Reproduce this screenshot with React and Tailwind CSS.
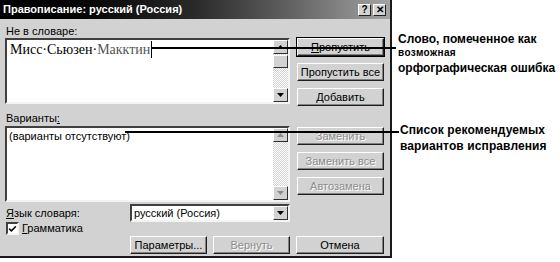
import { Check } from 'lucide-react';

function Btn({ children, disabled, isDefault, className = '' }) {
  return (
    <div
      className={`h-[18px] flex items-center justify-center text-[11px] leading-none border border-t-white border-l-white border-r-[#202020] border-b-[#202020] shadow-[inset_-1px_-1px_0_#808080] ${
        disabled ? 'text-[#8c8c8c] [text-shadow:1px_1px_0_#fff]' : 'text-black'
      } ${isDefault ? 'outline outline-1 outline-black' : ''} ${className}`}
    >
      {children}
    </div>
  );
}

function ScrollArrow({ up, disabled }) {
  return (
    <div className="w-[15px] h-[14px] flex items-center justify-center bg-[#d2d2d2] border border-t-white border-l-white border-r-[#303030] border-b-[#303030]">
      <svg width="7" height="4" viewBox="0 0 7 4">
        <path
          d={up ? 'M0 4 L3.5 0 L7 4 Z' : 'M0 0 L3.5 4 L7 0 Z'}
          fill={disabled ? '#8c8c8c' : '#000'}
        />
      </svg>
    </div>
  );
}

function Sunken({ className = '', children }) {
  return (
    <div className={`border-2 border-t-[#404040] border-l-[#404040] border-r-[#f4f4f4] border-b-[#f4f4f4] bg-white ${className}`}>
      {children}
    </div>
  );
}

export default function App() {
  return (
    <div className="relative w-[560px] h-[262px] bg-white flex font-['Liberation_Sans',Arial,sans-serif] overflow-hidden">
      {/* dialog */}
      <div className="w-[392px] h-[258px] bg-[#d2d2d2] border-r-2 border-b-2 border-r-[#1a1a1a] border-b-[#1a1a1a] flex flex-col">
        <div className="h-[19px] bg-linear-to-r from-black via-[#2a2a2a] to-[#a4a4a4] flex items-center pl-[3px] pr-[4px]">
          <span className="text-white font-bold text-[11px]">Правописание: русский (Россия)</span>
          <div className="ml-auto flex gap-[2px]">
            <div className="w-[13px] h-[12px] bg-[#d2d2d2] border border-t-white border-l-white border-r-[#202020] border-b-[#202020] flex items-center justify-center text-[10px] font-bold leading-none">?</div>
            <div className="w-[13px] h-[12px] bg-[#d2d2d2] border border-t-white border-l-white border-r-[#202020] border-b-[#202020] flex items-center justify-center text-[10px] font-bold leading-none">✕</div>
          </div>
        </div>

        {/* not in dictionary */}
        <div className="flex pl-[5px] pt-[6px]">
          <div className="w-[285px]">
            <div className="h-[13px] text-[11px] leading-[13px] pl-[1px]">Не в словаре:</div>
            <Sunken className="h-[66px] flex">
              <div className="flex-1 pl-[3px] pt-[1px] flex items-start">
                <span className="font-['Liberation_Serif','Times_New_Roman',serif] text-[14px] leading-[18px] text-black">
                  Мисс·Сьюзен·<span className="text-[#555]">Макктин</span>
                </span>
                <span className="w-[1px] h-[17px] bg-black ml-[1px]" />
              </div>
              <div className="w-[15px] flex flex-col bg-[repeating-conic-gradient(#fff_0_25%,#d2d2d2_0_50%)] bg-[length:2px_2px]">
                <ScrollArrow up />
                <div className="w-[15px] h-[13px] mt-[1px] bg-[#d2d2d2] border border-t-white border-l-white border-r-[#303030] border-b-[#303030]" />
                <div className="flex-1" />
                <ScrollArrow />
              </div>
            </Sunken>
          </div>
          <div className="ml-[7px] w-[87px] pt-[13px] flex flex-col gap-[7px]">
            <Btn isDefault>
              <span><span className="underline">П</span>ропустить</span>
            </Btn>
            <Btn>Пропустить все</Btn>
            <Btn>
              <span><span className="underline">Д</span>обавить</span>
            </Btn>
          </div>
        </div>

        {/* suggestions */}
        <div className="flex pl-[5px] pt-[6px]">
          <div className="w-[285px]">
            <div className="h-[14px] text-[11px] leading-[13px] pl-[1px]">
              Варианты<span className="underline">:</span>
            </div>
            <Sunken className="h-[76px] flex">
              <div className="flex-1 pl-[2px] pt-[2px] text-[11px] leading-[13px]">(варианты отсутствуют)</div>
              <div className="w-[15px] flex flex-col bg-[repeating-conic-gradient(#fff_0_25%,#d2d2d2_0_50%)] bg-[length:2px_2px]">
                <ScrollArrow up disabled />
                <div className="flex-1" />
                <ScrollArrow disabled />
              </div>
            </Sunken>
          </div>
          <div className="ml-[7px] w-[87px] pt-[15px] flex flex-col gap-[7px]">
            <Btn disabled>Заменить</Btn>
            <Btn disabled>Заменить все</Btn>
            <Btn disabled>Автозамена</Btn>
          </div>
        </div>

        {/* language */}
        <div className="flex items-center pl-[5px] pt-[2px]">
          <div className="w-[125px] text-[11px] pl-[1px]">
            <span className="underline">Я</span>зык словаря:
          </div>
          <Sunken className="w-[160px] h-[18px] flex items-center">
            <span className="flex-1 pl-[2px] text-[11px] leading-none">русский (Россия)</span>
            <ScrollArrow />
          </Sunken>
        </div>

        <div className="flex items-center pl-[6px] gap-[3px]">
          <div className="w-[13px] h-[13px] bg-white border-2 border-t-[#404040] border-l-[#404040] border-r-[#f4f4f4] border-b-[#f4f4f4] flex items-center justify-center">
            <Check size={10} strokeWidth={4} className="text-black" />
          </div>
          <span className="text-[11px] leading-none">
            <span className="underline">Г</span>рамматика
          </span>
        </div>

        <div className="flex pl-[130px] pt-[1px] gap-[6px]">
          <Btn className="w-[77px]">Параметры...</Btn>
          <Btn disabled className="w-[77px]">Вернуть</Btn>
          <Btn className="w-[88px]">Отмена</Btn>
        </div>
      </div>

      {/* callouts */}
      <div className="flex-1 pl-[6px] pt-[32px] flex flex-col whitespace-nowrap">
        <div className="text-[12px] font-bold leading-[14px]">Слово, помеченное как</div>
        <div className="text-[10px] font-bold leading-[14px] tracking-[0.4px]">возможная</div>
        <div className="text-[12px] font-bold leading-[16px]">орфографическая ошибка</div>
        <div className="pl-[2px] pt-[46px] text-[12px] font-bold leading-[16px] tracking-[0.1px]">
          <div>Список рекомендуемых</div>
          <div>вариантов исправления</div>
        </div>
      </div>

      {/* callout leader lines */}
      <div className="absolute left-[152px] top-[47px] w-[244px] h-[2px] bg-black" />
      <div className="absolute left-[125px] top-[131px] w-[274px] h-[2px] bg-black" />
    </div>
  );
}
